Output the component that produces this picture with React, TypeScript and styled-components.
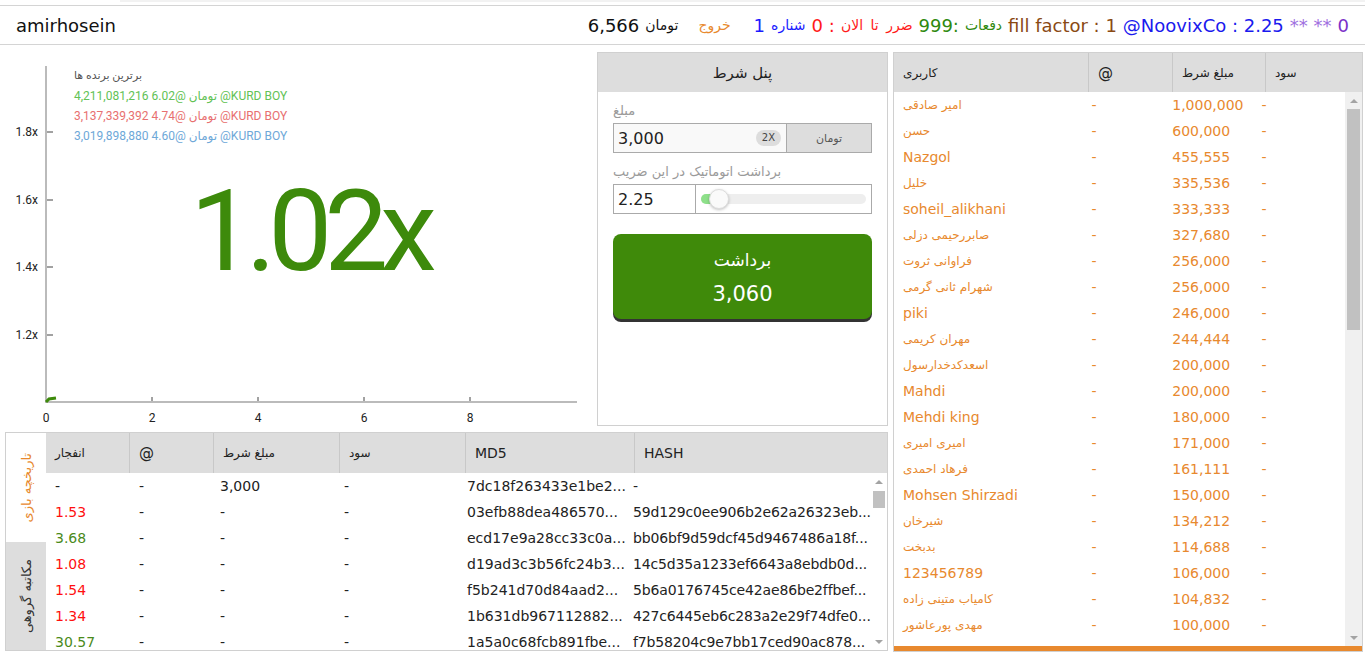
import React from "react";
import styled, { createGlobalStyle } from "styled-components";

const GlobalStyle = createGlobalStyle`
  * {
    margin: 0;
    padding: 0;
    box-sizing: border-box;
  }
  html, body {
    background: #fff;
    font-family: "DejaVu Sans", Verdana, sans-serif;
    color: #111;
  }
`;

const Page = styled.div`
  width: 1365px;
  height: 654px;
  overflow: hidden;
`;

const TopStrip = styled.div`
  height: 2px;
  margin: 0 0 3px 120px;
  background: #f2f2f2;
`;

const Header = styled.header`
  display: flex;
  align-items: center;
  justify-content: space-between;
  height: 40px;
  padding: 0 16px;
  border-top: 1px solid #d4d4d4;
  border-bottom: 1px solid #d4d4d4;
  font-size: 18px;
`;

const Status = styled.div`
  display: flex;
  align-items: center;
  gap: 6px;
  direction: ltr;
`;

const Piece = styled.span<{ $c: string; $fa?: boolean; $ml?: number }>`
  color: ${(p) => p.$c};
  font-size: ${(p) => (p.$fa ? "14px" : "18px")};
  margin-left: ${(p) => p.$ml || 0}px;
  word-spacing: ${(p) => (p.$fa ? "3px" : "0")};
  unicode-bidi: isolate;
  white-space: nowrap;
`;

const Main = styled.main`
  display: flex;
  gap: 5px;
  padding-top: 7px;
`;

const LeftCol = styled.div`
  width: 888px;
  display: flex;
  flex-direction: column;
  gap: 6px;
`;

const TopRow = styled.div`
  display: flex;
  gap: 5px;
  height: 374px;
`;

const ChartBox = styled.div`
  position: relative;
  width: 592px;
  height: 374px;
  font-family: Roboto, "DejaVu Sans", sans-serif;
`;

const Legend = styled.div`
  position: absolute;
  left: 74px;
  top: 14px;
  display: flex;
  flex-direction: column;
  font-size: 12px;
`;

const LegendTitle = styled.div`
  font-size: 11px;
  color: #555;
  height: 20px;
  line-height: 20px;
  direction: rtl;
  text-align: left;
`;

const LegendLine = styled.div<{ $c: string }>`
  color: ${(p) => p.$c};
  height: 20px;
  line-height: 20px;
  direction: ltr;
  white-space: nowrap;
`;

const Multiplier = styled.div`
  position: absolute;
  left: 190px;
  top: 122px;
  font-size: 114px;
  line-height: 1;
  letter-spacing: -8px;
  color: #3d8a0b;
`;

const BetPanel = styled.section`
  width: 291px;
  border: 1px solid #d0d0d0;
  display: flex;
  flex-direction: column;
`;

const PanelTitle = styled.div`
  height: 39px;
  background: #ddd;
  display: flex;
  align-items: center;
  justify-content: center;
  font-size: 15px;
  color: #222;
  direction: rtl;
`;

const PanelBody = styled.div`
  padding: 6px 15px 0;
`;

const FieldLabel = styled.div<{ $top?: number }>`
  height: 25px;
  line-height: 25px;
  margin-top: ${(p) => p.$top || 0}px;
  font-size: 13px;
  color: #9a9a9a;
  direction: rtl;
  text-align: left;
`;

const InputGroup = styled.div`
  display: flex;
  height: 30px;
  border: 1px solid #aaa;
`;

const AmountField = styled.div`
  flex: 1;
  display: flex;
  align-items: center;
  justify-content: space-between;
  padding: 0 5px 0 4px;
  background: #f9f9f9;
  font-size: 16px;
  color: #222;
`;

const Chip = styled.span`
  font-size: 10px;
  line-height: 16px;
  padding: 0 6px;
  border-radius: 8px;
  background: #ddd;
  color: #444;
`;

const Addon = styled.div`
  width: 85px;
  display: flex;
  align-items: center;
  justify-content: center;
  border-left: 1px solid #aaa;
  background: #ddd;
  font-size: 11px;
  color: #555;
`;

const MultField = styled.div`
  width: 82px;
  display: flex;
  align-items: center;
  padding-left: 4px;
  border-right: 1px solid #aaa;
  font-size: 16px;
  color: #222;
`;

const SliderBox = styled.div`
  position: relative;
  flex: 1;
`;

const Track = styled.div`
  position: absolute;
  left: 5px;
  right: 5px;
  top: 9px;
  height: 10px;
  border-radius: 5px;
  background: #eee;
`;

const TrackFill = styled.div`
  width: 18px;
  height: 10px;
  border-radius: 5px;
  background: #8ee08a;
`;

const Knob = styled.div`
  position: absolute;
  left: 13px;
  top: 4px;
  width: 20px;
  height: 20px;
  border-radius: 50%;
  background: #fafafa;
  border: 1px solid #ddd;
  box-shadow: 0 1px 3px rgba(0, 0, 0, 0.25);
`;

const CashButton = styled.button`
  width: 100%;
  height: 85px;
  margin-top: 20px;
  display: flex;
  flex-direction: column;
  align-items: center;
  justify-content: center;
  border: none;
  border-radius: 8px;
  background: #3f8a0a;
  box-shadow: 0 3px 0 #333;
  color: #fff;
  font-family: "DejaVu Sans", Verdana, sans-serif;
`;

const ButtonLine = styled.span<{ $size: number }>`
  font-size: ${(p) => p.$size}px;
  line-height: 34px;
`;

const History = styled.section`
  margin-left: 5px;
  width: 883px;
  height: 219px;
  display: flex;
  border: 1px solid #d0d0d0;
`;

const Tabs = styled.div`
  width: 40px;
  display: flex;
  flex-direction: column;
`;

const Tab = styled.div<{ $active?: boolean }>`
  flex: 1;
  display: flex;
  align-items: center;
  justify-content: center;
  background: ${(p) => (p.$active ? "#fff" : "#ddd")};
  color: ${(p) => (p.$active ? "#e8892e" : "#333")};
  font-size: 13px;
`;

const TabText = styled.span`
  writing-mode: vertical-rl;
  transform: rotate(180deg);
  direction: rtl;
`;

const HistTable = styled.div`
  flex: 1;
  min-width: 0;
  display: flex;
  flex-direction: column;
`;

const HistHead = styled.div`
  display: grid;
  grid-template-columns: 84px 84px 126px 126px 169px 1fr;
  height: 40px;
  background: #ddd;
`;

const HeadCell = styled.div<{ $size?: number; $last?: boolean }>`
  display: flex;
  align-items: center;
  padding-left: 9px;
  border-right: ${(p) => (p.$last ? "none" : "1px solid #c8c8c8")};
  font-size: ${(p) => p.$size || 12}px;
  color: #222;
  white-space: nowrap;
`;

const ScrollArea = styled.div`
  flex: 1;
  min-height: 0;
  display: flex;
`;

const RowList = styled.div`
  flex: 1;
  min-width: 0;
  overflow: hidden;
`;

const ScrollBar = styled.div<{ $w: number; $bg: string }>`
  width: ${(p) => p.$w}px;
  display: flex;
  flex-direction: column;
  background: ${(p) => p.$bg};
`;

const ScrollArrow = styled.div<{ $down?: boolean }>`
  height: 17px;
  display: flex;
  align-items: center;
  justify-content: center;

  &::after {
    content: "";
    border-left: 4px solid transparent;
    border-right: 4px solid transparent;
    ${(p) =>
      p.$down ? "border-top: 4px solid #a3a3a3;" : "border-bottom: 4px solid #a3a3a3;"}
  }
`;

const ScrollTrack = styled.div`
  flex: 1;
  padding: 0 2px;
`;

const ScrollThumb = styled.div<{ $top: number; $h: number }>`
  margin-top: ${(p) => p.$top}px;
  height: ${(p) => p.$h}px;
  background: #c1c1c1;
`;

const HistRow = styled.div`
  display: grid;
  grid-template-columns: 84px 81px 124px 123px 166px 1fr;
  height: 26px;
  align-items: center;
  font-size: 14px;
  color: #222;
`;

const HistCell = styled.div<{ $c?: string; $tight?: boolean }>`
  padding-left: 9px;
  white-space: nowrap;
  color: ${(p) => p.$c || "#222"};
  letter-spacing: ${(p) => (p.$tight ? "-0.15px" : "0")};
`;

const Board = styled.section`
  width: 470px;
  height: 600px;
  display: flex;
  flex-direction: column;
  border: 1px solid #d0d0d0;
`;

const BoardHead = styled.div`
  display: grid;
  grid-template-columns: 195px 84px 93px 1fr;
  height: 39px;
  background: #ddd;
`;

const BoardRow = styled.div`
  display: grid;
  grid-template-columns: 41.8% 17.9% 19.8% 1fr;
  height: 26px;
  align-items: center;
  color: #e8892e;
`;

const BoardCell = styled.div<{ $fa?: boolean }>`
  padding-left: 9px;
  white-space: nowrap;
  overflow: hidden;
  font-size: ${(p) => (p.$fa ? "12px" : "14px")};
  direction: ${(p) => (p.$fa ? "rtl" : "ltr")};
  text-align: left;
`;

const OrangeBar = styled.div`
  height: 5px;
  background: #e8892e;
`;

const isFa = (s: string) => /[\u0600-\u06FF]/.test(s);

const leaders: [string, string][] = [
  ["امیر صادقی", "1,000,000"],
  ["حسن", "600,000"],
  ["Nazgol", "455,555"],
  ["خلیل", "335,536"],
  ["soheil_alikhani", "333,333"],
  ["صابررحیمی دزلی", "327,680"],
  ["فراوانی ثروت", "256,000"],
  ["شهرام ثانی گرمی", "256,000"],
  ["piki", "246,000"],
  ["مهران کریمی", "244,444"],
  ["اسعدکدخدارسول", "200,000"],
  ["Mahdi", "200,000"],
  ["Mehdi king", "180,000"],
  ["امیری امیری", "171,000"],
  ["فرهاد احمدی", "161,111"],
  ["Mohsen Shirzadi", "150,000"],
  ["شیرخان", "134,212"],
  ["بدبخت", "114,688"],
  ["123456789", "106,000"],
  ["کامیاب متینی زاده", "104,832"],
  ["مهدی پورعاشور", "100,000"],
];

type Game = { crash: string; bet: string; md5: string; hash: string };

const games: Game[] = [
  { crash: "-", bet: "3,000", md5: "7dc18f263433e1be2...", hash: "-" },
  { crash: "1.53", bet: "-", md5: "03efb88dea486570...", hash: "59d129c0ee906b2e62a26323eb..." },
  { crash: "3.68", bet: "-", md5: "ecd17e9a28cc33c0a...", hash: "bb06bf9d59dcf45d9467486a18f..." },
  { crash: "1.08", bet: "-", md5: "d19ad3c3b56fc24b3...", hash: "14c5d35a1233ef6643a8ebdb0d..." },
  { crash: "1.54", bet: "-", md5: "f5b241d70d84aad2...", hash: "5b6a0176745ce42ae86be2ffbef..." },
  { crash: "1.34", bet: "-", md5: "1b631db967112882...", hash: "427c6445eb6c283a2e29f74dfe0..." },
  { crash: "30.57", bet: "-", md5: "1a5a0c68fcb891fbe...", hash: "f7b58204c9e7bb17ced90ac878..." },
];

const crashColor = (c: string) => {
  if (c === "-") return "#222";
  return parseFloat(c) < 2 ? "#ff1010" : "#4a8a1a";
};

const Chart = () => {
  const yTicks = [
    { y: 80, t: "1.8x" },
    { y: 148, t: "1.6x" },
    { y: 215, t: "1.4x" },
    { y: 283, t: "1.2x" },
  ];
  const xTicks = [46, 152, 258, 364, 470];
  return (
    <svg width="592" height="374" style={{ position: "absolute", left: 0, top: 0 }}>
      <line x1="46" y1="14" x2="46" y2="351" stroke="#bbb" strokeWidth="2" />
      <line x1="45" y1="350" x2="577" y2="350" stroke="#bbb" strokeWidth="2" />
      {yTicks.map((t) => (
        <g key={t.t}>
          <line x1="47" y1={t.y} x2="53" y2={t.y} stroke="#444" strokeWidth="1" />
          <text x="38" y={t.y + 4} textAnchor="end" fontSize="12" fill="#222" fontFamily="Roboto">
            {t.t}
          </text>
        </g>
      ))}
      {xTicks.map((x, i) => (
        <g key={x}>
          {i > 0 && <line x1={x} y1="345" x2={x} y2="349" stroke="#444" strokeWidth="1" />}
          <text x={x} y="370" textAnchor="middle" fontSize="12" fill="#222" fontFamily="Roboto">
            {i * 2}
          </text>
        </g>
      ))}
      <path d="M46 350 L49 347 L56 346" fill="none" stroke="#3d8a0b" strokeWidth="3" />
    </svg>
  );
};

const FakeScroll = ({ w, bg, top, h }: { w: number; bg: string; top: number; h: number }) => (
  <ScrollBar $w={w} $bg={bg}>
    <ScrollArrow />
    <ScrollTrack>
      <ScrollThumb $top={top} $h={h} />
    </ScrollTrack>
    <ScrollArrow $down />
  </ScrollBar>
);

const App = () => {
  return (
    <>
      <GlobalStyle />
      <Page>
        <TopStrip />
        <Header>
          <span>amirhosein</span>
          <Status>
            <Piece $c="#111">6,566</Piece>
            <Piece $c="#111" $fa>
              تومان
            </Piece>
            <Piece $c="#e8892e" $fa $ml={14}>
              خروج
            </Piece>
            <Piece $c="#1a1aff" $ml={17}>
              1
            </Piece>
            <Piece $c="#1a1aff" $fa>
              شناره
            </Piece>
            <Piece $c="#ff1a1a">0</Piece>
            <Piece $c="#ff1a1a">:</Piece>
            <Piece $c="#ff1a1a" $fa>
              ضرر تا الان
            </Piece>
            <Piece $c="#2f8a0f">999:</Piece>
            <Piece $c="#2f8a0f" $fa>
              دفعات
            </Piece>
            <Piece $c="#8a4a14">fill factor : 1</Piece>
            <Piece $c="#1a1aee">@NoovixCo : 2.25</Piece>
            <Piece $c="#a070e0">** **</Piece>
            <Piece $c="#7b30c8">0</Piece>
          </Status>
        </Header>
        <Main>
          <LeftCol>
            <TopRow>
              <ChartBox>
                <Chart />
                <Legend>
                  <LegendTitle>برترین برنده ها</LegendTitle>
                  <LegendLine $c="#62c255">4,211,081,216 6.02@ تومان @KURD BOY</LegendLine>
                  <LegendLine $c="#e87070">3,137,339,392 4.74@ تومان @KURD BOY</LegendLine>
                  <LegendLine $c="#6ea8d8">3,019,898,880 4.60@ تومان @KURD BOY</LegendLine>
                </Legend>
                <Multiplier>1.02x</Multiplier>
              </ChartBox>
              <BetPanel>
                <PanelTitle>پنل شرط</PanelTitle>
                <PanelBody>
                  <FieldLabel>مبلغ</FieldLabel>
                  <InputGroup>
                    <AmountField>
                      <span>3,000</span>
                      <Chip>2X</Chip>
                    </AmountField>
                    <Addon>تومان</Addon>
                  </InputGroup>
                  <FieldLabel $top={6}>برداشت اتوماتیک در این ضریب</FieldLabel>
                  <InputGroup>
                    <MultField>2.25</MultField>
                    <SliderBox>
                      <Track>
                        <TrackFill />
                      </Track>
                      <Knob />
                    </SliderBox>
                  </InputGroup>
                  <CashButton>
                    <ButtonLine $size={17}>برداشت</ButtonLine>
                    <ButtonLine $size={21}>3,060</ButtonLine>
                  </CashButton>
                </PanelBody>
              </BetPanel>
            </TopRow>
            <History>
              <Tabs>
                <Tab $active>
                  <TabText>تاریخچه بازی</TabText>
                </Tab>
                <Tab>
                  <TabText>مکاتبه گروهی</TabText>
                </Tab>
              </Tabs>
              <HistTable>
                <HistHead>
                  <HeadCell>انفجار</HeadCell>
                  <HeadCell $size={15}>@</HeadCell>
                  <HeadCell>مبلغ شرط</HeadCell>
                  <HeadCell>سود</HeadCell>
                  <HeadCell $size={14}>MD5</HeadCell>
                  <HeadCell $size={14} $last>
                    HASH
                  </HeadCell>
                </HistHead>
                <ScrollArea>
                  <RowList>
                    {games.map((g, i) => (
                      <HistRow key={i}>
                        <HistCell $c={crashColor(g.crash)}>{g.crash}</HistCell>
                        <HistCell>-</HistCell>
                        <HistCell>{g.bet}</HistCell>
                        <HistCell>-</HistCell>
                        <HistCell>{g.md5}</HistCell>
                        <HistCell $tight>{g.hash}</HistCell>
                      </HistRow>
                    ))}
                  </RowList>
                  <FakeScroll w={16} bg="#fff" top={1} h={17} />
                </ScrollArea>
              </HistTable>
            </History>
          </LeftCol>
          <Board>
            <BoardHead>
              <HeadCell>کاربری</HeadCell>
              <HeadCell $size={15}>@</HeadCell>
              <HeadCell>مبلغ شرط</HeadCell>
              <HeadCell $last>سود</HeadCell>
            </BoardHead>
            <ScrollArea>
              <RowList>
                {leaders.map(([name, amount], i) => (
                  <BoardRow key={i}>
                    <BoardCell $fa={isFa(name)}>{name}</BoardCell>
                    <BoardCell>-</BoardCell>
                    <BoardCell>{amount}</BoardCell>
                    <BoardCell>-</BoardCell>
                  </BoardRow>
                ))}
              </RowList>
              <FakeScroll w={17} bg="#f0f0f0" top={0} h={221} />
            </ScrollArea>
            <OrangeBar />
          </Board>
        </Main>
      </Page>
    </>
  );
};

export default App;
